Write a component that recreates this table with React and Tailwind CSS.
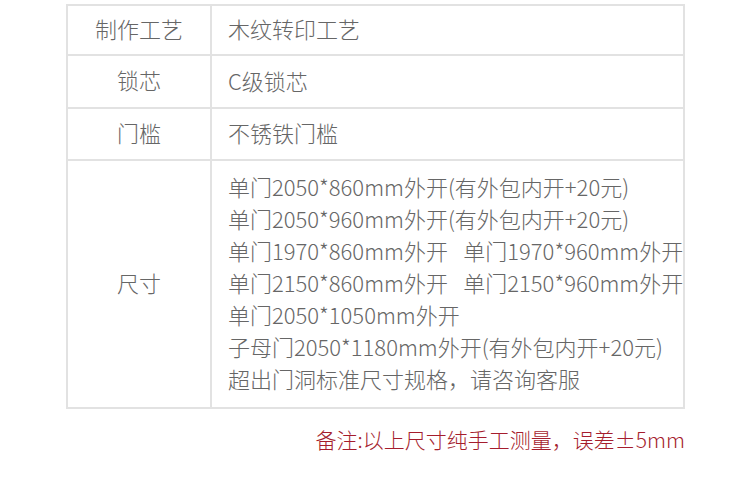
import React from 'react';

const rows = [
  { label: '制作工艺', value: ['木纹转印工艺'], h: 'h-[48px]' },
  { label: '锁芯', value: ['C级锁芯'], h: 'h-[53px]' },
  { label: '门槛', value: ['不锈铁门槛'], h: 'h-[52px]' },
  {
    label: '尺寸',
    value: [
      '单门2050*860mm外开(有外包内开+20元)',
      '单门2050*960mm外开(有外包内开+20元)',
      '单门1970*860mm外开\u2002\u2009单门1970*960mm外开',
      '单门2150*860mm外开\u2002\u2009单门2150*960mm外开',
      '单门2050*1050mm外开',
      '子母门2050*1180mm外开(有外包内开+20元)',
      '超出门洞标准尺寸规格，请咨询客服',
    ],
    h: 'h-[248px]',
  },
];

export default function App() {
  return (
    <div
      className="w-[750px] h-[481px] bg-white pt-[4px] text-[#666] font-light overflow-hidden"
      style={{ fontFamily: '"Noto Sans CJK SC", "Noto Sans", sans-serif' }}
    >
      {/* spec table */}
      <div className="ml-[66px] w-[619px] border-2 border-[#e2e2e2]">
        {rows.map((row, i) => (
          <div
            key={row.label}
            className={`flex ${row.h} ${i > 0 ? 'border-t-2 border-[#e2e2e2]' : ''}`}
          >
            <div className="w-[144px] shrink-0 border-r-2 border-[#e2e2e2] flex items-center justify-center pb-[4px] text-[22px]">
              {row.label}
            </div>
            <div className="flex-1 flex flex-col justify-center pl-[16px] pb-[4px] text-[22px] leading-[32px] whitespace-nowrap">
              {row.value.map((line) => (
                <div key={line}>{line}</div>
              ))}
            </div>
          </div>
        ))}
      </div>

      {/* note */}
      <div className="w-[685px] mt-[15px] text-right text-[21px] leading-[30px] text-[#a51d2d]">
        备注:以上尺寸纯手工测量，误差±5mm
      </div>
    </div>
  );
}
